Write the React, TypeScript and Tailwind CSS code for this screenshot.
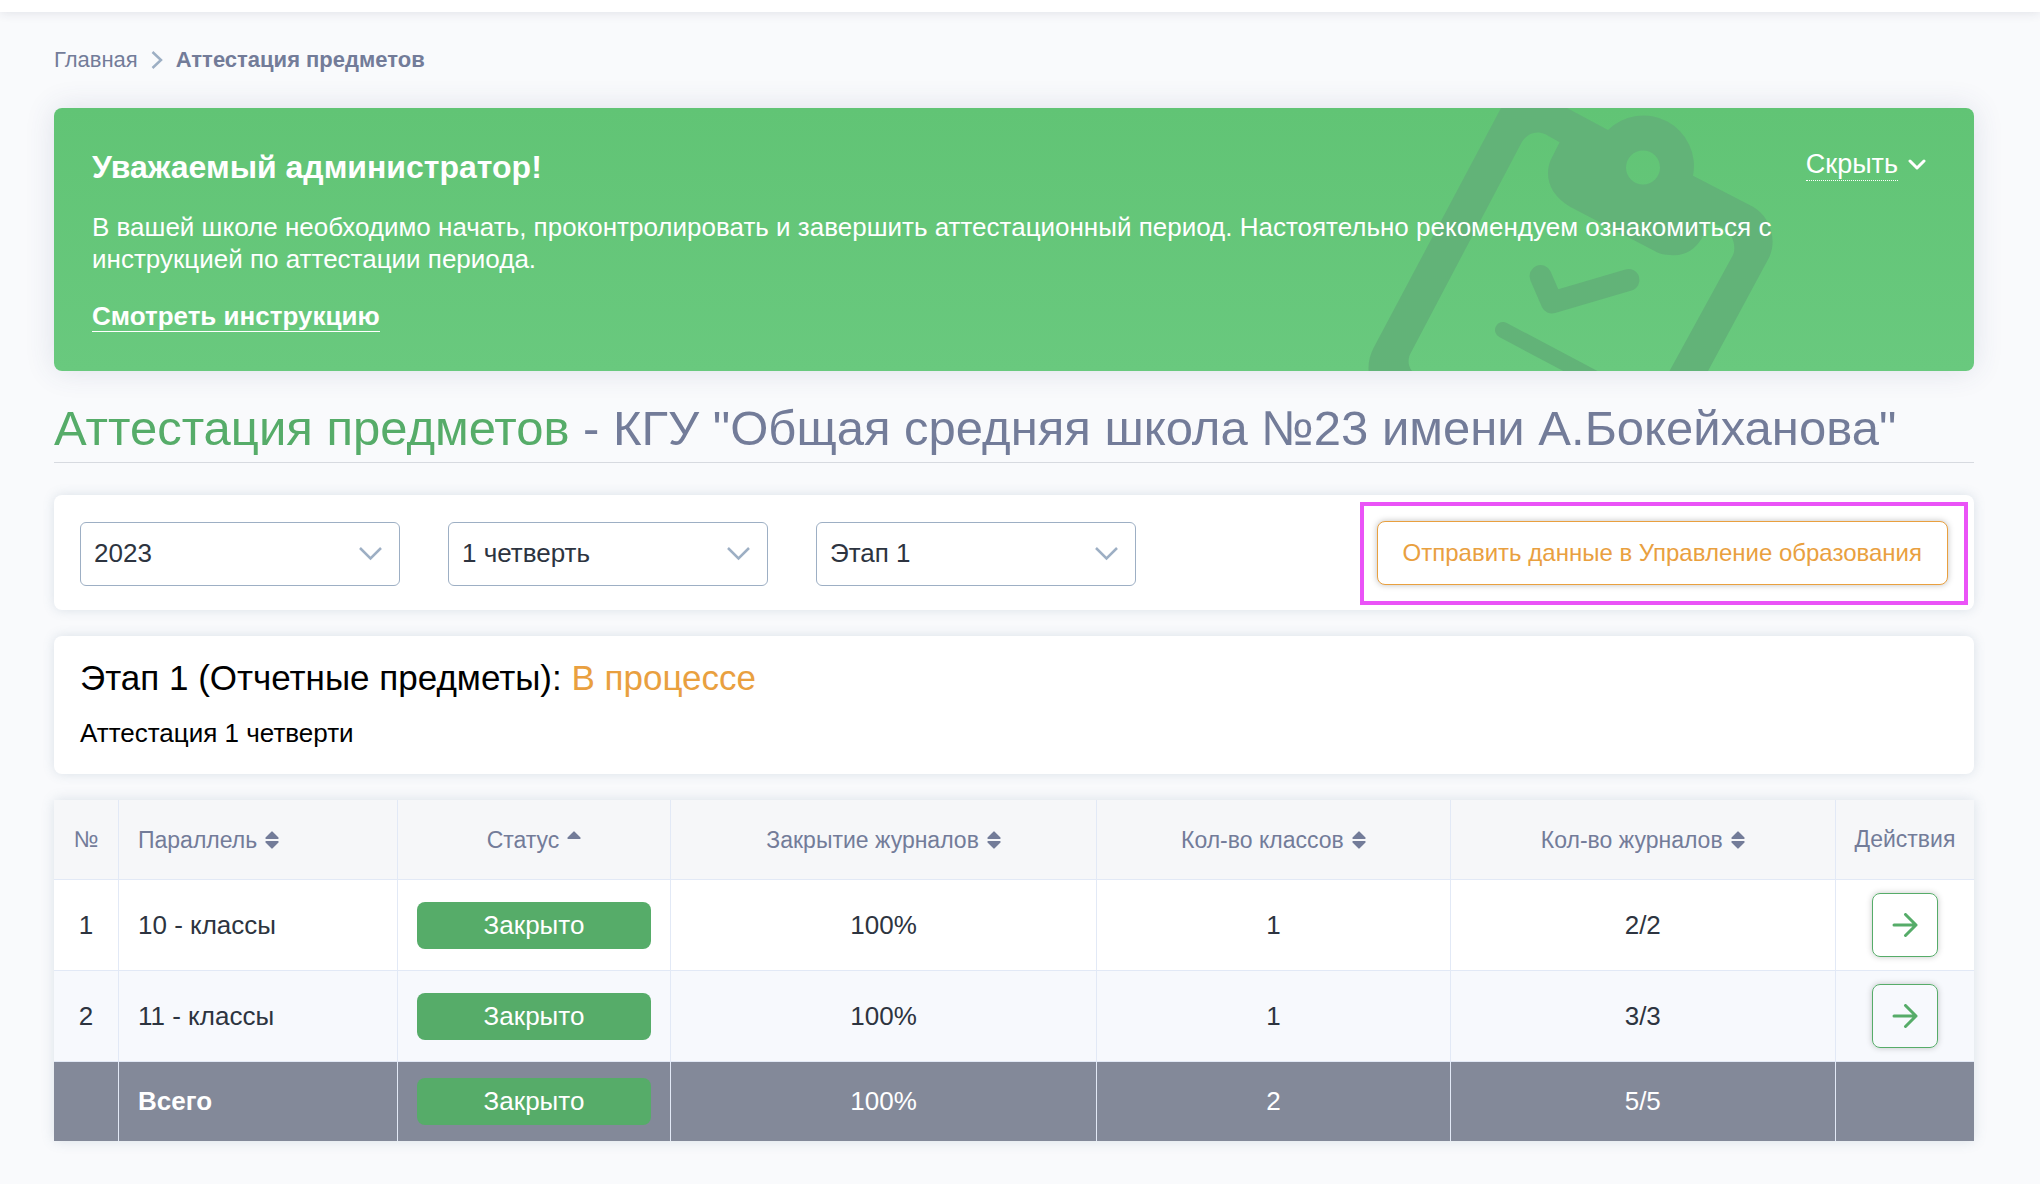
import { useState } from 'react';

interface GradeRow {
  id: number;
  name: string;
  status: string;
  closed: string;
  classes: string;
  journals: string;
}

const rows: GradeRow[] = [
  { id: 1, name: '10 - классы', status: 'Закрыто', closed: '100%', classes: '1', journals: '2/2' },
  { id: 2, name: '11 - классы', status: 'Закрыто', closed: '100%', classes: '1', journals: '3/3' },
];

const filters = [
  { id: 'year', label: 'Учебный год', options: ['2023', '2022'] },
  { id: 'quarter', label: 'Четверть', options: ['1 четверть', '2 четверть', '3 четверть', '4 четверть'] },
  { id: 'stage', label: 'Этап', options: ['Этап 1', 'Этап 2'] },
];

function ClipboardArt() {
  return (
    <svg
      className="absolute top-0 right-[194px] h-[263px] w-[420px]"
      viewBox="0 0 420 263"
      fill="#62b378"
      aria-hidden="true"
    >
      <path
        fillRule="evenodd"
        d="M141 0H207L248 22A50.5 50.5 0 0 1 333 67.7L393 98.7C408 107 418 129 409.5 148.7L348 263H309.5L373 147C376 140 374 127 365 121L350 113L342 130C335 142 323 149 310 147C305 147 300 146 296 143.7L210 98.7C195 90 188 78 188 65.3C188 60 189 56 190.7 52L199.6 34.3L185.4 26.3C177 22.500 168 24.500 162 33.700L51.400 243.700C48 249 47 257 52 263H8.600C8 254 10 247 13.500 240ZM283 42.500A17 17 0 1 0 283 76.500A17 17 0 1 0 283 42.500Z"
      />
      <path
        d="M180.500 168L192 194.500L268.500 172"
        fill="none"
        stroke="#62b378"
        strokeWidth="22"
        strokeLinecap="round"
        strokeLinejoin="round"
      />
      <path d="M143 222L260 284" stroke="#62b378" strokeWidth="16" strokeLinecap="round" />
    </svg>
  );
}

function SortIcon({ asc }: { asc?: boolean }) {
  return (
    <svg className="h-[18px] w-[14px] shrink-0" viewBox="0 0 14 18" fill="currentColor" aria-hidden="true">
      <path d="M6.300 0.700Q7 0 7.700 0.700L13.500 6.500Q14 7.800 13 8H1Q0 7.800 0.500 6.500Z" />
      {!asc && <path d="M6.300 17.300Q7 18 7.700 17.300L13.500 11.500Q14 10.200 13 10H1Q0 10.200 0.500 11.500Z" />}
    </svg>
  );
}

function SortHeader({ title, asc }: { title: string; asc?: boolean }) {
  return (
    <button type="button" className="inline-flex items-center gap-2 align-middle">
      {title}
      <SortIcon asc={asc} />
    </button>
  );
}

function StatusBadge({ text }: { text: string }) {
  return <span className="block rounded-lg bg-[#56ac69] text-center leading-[47px] text-white">{text}</span>;
}

function FilterSelect({ id, label, options }: { id: string; label: string; options: string[] }) {
  return (
    <div className="relative w-80">
      <select
        id={id}
        aria-label={label}
        className="h-16 w-full appearance-none rounded-md border border-[#9dafc4] bg-white px-[13px] text-[26px] text-[#2d3440]"
      >
        {options.map(option => (
          <option key={option}>{option}</option>
        ))}
      </select>
      <svg
        className="pointer-events-none absolute top-6 right-[18px] h-4 w-6"
        viewBox="0 0 24 16"
        fill="none"
        stroke="#9dafc4"
        strokeWidth="2.500"
        aria-hidden="true"
      >
        <path d="M2 2L12.500 12.500L23 2" />
      </svg>
    </div>
  );
}

export default function App() {
  const [hidden, setHidden] = useState(false);

  return (
    <div className="min-h-screen bg-[#f9fafc] font-['Liberation_Sans',Arial,sans-serif] text-[#2d3440]">
      <header className="h-3 bg-white shadow-[0_0_12px_rgba(40,50,80,0.14)]" />

      <main className="pr-[66px] pb-10 pl-[54px]">
        <nav className="flex items-center gap-[13px] pt-8 pb-8 text-[22px] leading-8 text-[#737c99]">
          <a href="#">Главная</a>
          <svg className="h-[18px] w-3" viewBox="0 0 12 18" fill="none" stroke="#9dafc4" strokeWidth="2.500" aria-hidden="true">
            <path d="M1.500 1L10 9L1.500 17" />
          </svg>
          <span className="font-bold">Аттестация предметов</span>
        </nav>

        <section className="relative overflow-clip rounded-lg bg-linear-to-b from-[#61c475] to-[#69c97e] text-white shadow-[0_0_30px_rgba(60,70,120,0.14)]">
          <ClipboardArt />
          <div className="relative px-[38px] pt-10 pb-[39px]">
            <div className="flex items-start justify-between pr-2.5">
              <h2 className="text-[32px] leading-[38px] font-bold">Уважаемый администратор!</h2>
              <button
                type="button"
                onClick={() => setHidden(!hidden)}
                className="flex items-center gap-2.5 text-[27px] leading-8"
              >
                <span className="border-b border-dotted border-white">Скрыть</span>
                <svg className="h-3 w-[18px]" viewBox="0 0 18 12" fill="none" stroke="white" strokeWidth="3" strokeLinecap="round" strokeLinejoin="round" aria-hidden="true">
                  <path d="M2 2L9 9L16 2" />
                </svg>
              </button>
            </div>
            {!hidden && (
              <>
                <p className="mt-[25px] max-w-[1740px] text-[26px] leading-8">
                  В вашей школе необходимо начать, проконтролировать и завершить аттестационный период. Настоятельно
                  рекомендуем ознакомиться с инструкцией по аттестации периода.
                </p>
                <a href="#" className="mt-[26px] block w-fit border-b border-white text-[26px] leading-[30px] font-bold">
                  Смотреть инструкцию
                </a>
              </>
            )}
          </div>
        </section>

        <h1 className="mt-7 border-b border-[#d7dae0] pb-[5px] text-[49px] leading-[58px] text-[#737c99]">
          <span className="text-[#56ac69]">Аттестация предметов</span> - КГУ "Общая средняя школа №23 имени А.Бокейханова"
        </h1>

        <section className="mt-8 flex items-center rounded-lg bg-white pt-[7px] pr-1.5 pb-[5px] pl-[26px] shadow-[0_0_12px_rgba(80,110,140,0.18)]">
          <div className="flex gap-12">
            {filters.map(filter => (
              <FilterSelect key={filter.id} {...filter} />
            ))}
          </div>
          <div className="ml-auto border-4 border-[#ea53f7] pt-[15px] pr-4 pb-4 pl-[13px]">
            <button
              type="button"
              className="h-16 rounded-lg border border-[#e9a03f] bg-white px-[25px] text-2xl text-[#e9a03f] shadow-[0_0_6px_rgba(0,0,0,0.25)]"
            >
              Отправить данные в Управление образования
            </button>
          </div>
        </section>

        <section className="mt-[26px] rounded-lg bg-white px-[26px] pt-5 pb-6 text-black shadow-[0_0_12px_rgba(80,110,140,0.18)]">
          <h2 className="text-[35px] leading-[44px]">
            Этап 1 (Отчетные предметы): <span className="text-[#e9a03f]">В процессе</span>
          </h2>
          <p className="mt-4 text-[26px] leading-[34px]">Аттестация 1 четверти</p>
        </section>

        <table className="mt-[26px] w-full table-fixed border-separate border-spacing-0 bg-white text-center text-[26px] shadow-[0_0_12px_rgba(80,110,140,0.18)] [&_td]:border-[#e2e9f6] [&_td:not(:last-child)]:border-r [&_th]:border-[#e2e9f6] [&_th:not(:last-child)]:border-r">
          <colgroup>
            <col className="w-[65px]" />
            <col className="w-[279px]" />
            <col className="w-[273px]" />
            <col className="w-[22.2%]" />
            <col className="w-[18.4%]" />
            <col />
            <col className="w-[138px]" />
          </colgroup>
          <thead className="bg-[#f6f7f9] text-[23px] text-[#737c99] [&_th]:h-20 [&_th]:border-b [&_th]:font-normal">
            <tr>
              <th>№</th>
              <th className="pl-[19px] text-left">
                <SortHeader title="Параллель" />
              </th>
              <th>
                <SortHeader title="Статус" asc />
              </th>
              <th>
                <SortHeader title="Закрытие журналов" />
              </th>
              <th>
                <SortHeader title="Кол-во классов" />
              </th>
              <th>
                <SortHeader title="Кол-во журналов" />
              </th>
              <th>Действия</th>
            </tr>
          </thead>
          <tbody className="[&_td]:h-[91px] [&_td]:border-b">
            {rows.map(row => (
              <tr key={row.id} className="even:bg-[#f7f9fd]">
                <td>{row.id}</td>
                <td className="pl-[19px] text-left">{row.name}</td>
                <td className="px-[19px]">
                  <StatusBadge text={row.status} />
                </td>
                <td>{row.closed}</td>
                <td>{row.classes}</td>
                <td>{row.journals}</td>
                <td>
                  <button
                    type="button"
                    aria-label={`Открыть ${row.name}`}
                    className="inline-flex h-16 w-[66px] items-center justify-center rounded-lg border border-[#56ac69] align-middle shadow-[0_0_6px_rgba(0,0,0,0.22)]"
                  >
                    <svg className="h-6 w-[26px]" viewBox="0 0 26 24" fill="none" stroke="#56ac69" strokeWidth="3" strokeLinecap="round" strokeLinejoin="round" aria-hidden="true">
                      <path d="M2 12H24M13.500 1.500L24 12L13.500 22.500" />
                    </svg>
                  </button>
                </td>
              </tr>
            ))}
          </tbody>
          <tfoot className="bg-[#838999] text-white [&_td]:h-[79px]">
            <tr>
              <td />
              <td className="pl-[19px] text-left font-bold">Всего</td>
              <td className="px-[19px]">
                <StatusBadge text="Закрыто" />
              </td>
              <td>100%</td>
              <td>2</td>
              <td>5/5</td>
              <td />
            </tr>
          </tfoot>
        </table>
      </main>
    </div>
  );
}
